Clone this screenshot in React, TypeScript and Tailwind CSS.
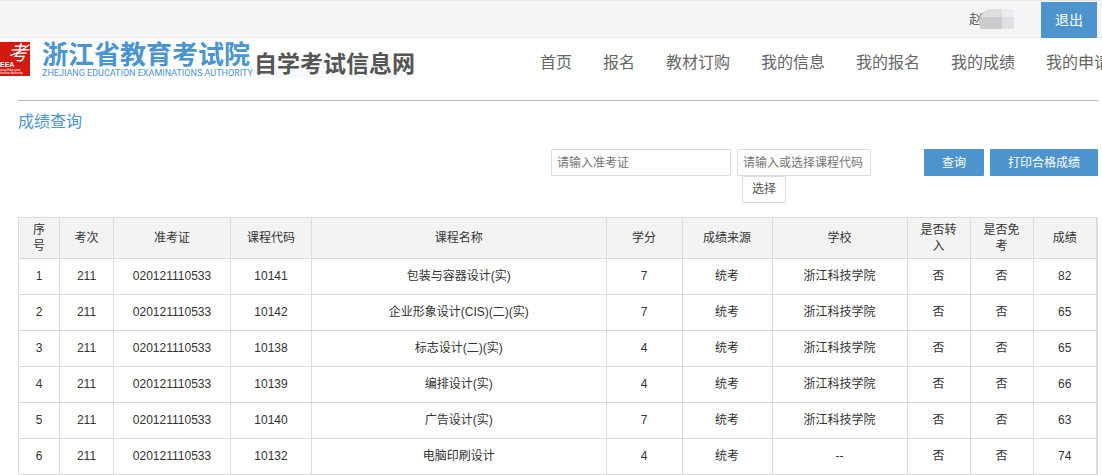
import { clsx } from "clsx";

type Score = {
  term: string;
  ticket: string;
  code: string;
  name: string;
  credit: number;
  source: string;
  school: string;
  transferred: string;
  exempt: string;
  score: number;
};

const NAV = ["首页", "报名", "教材订购", "我的信息", "我的报名", "我的成绩", "我的申请"];

const COLUMNS = [
  { label: "序号", width: "w-[41px]" },
  { label: "考次", width: "w-[54px]" },
  { label: "准考证", width: "w-[117px]" },
  { label: "课程代码", width: "w-[81px]" },
  { label: "课程名称", width: "" },
  { label: "学分", width: "w-[76px]" },
  { label: "成绩来源", width: "w-[90px]" },
  { label: "学校", width: "w-[135px]" },
  { label: "是否转入", width: "w-[63px]" },
  { label: "是否免考", width: "w-[63px]" },
  { label: "成绩", width: "w-[64px]" },
];

const base = { term: "211", ticket: "020121110533", source: "统考", school: "浙江科技学院", transferred: "否", exempt: "否" };

const SCORES: Score[] = [
  { ...base, code: "10141", name: "包装与容器设计(实)", credit: 7, score: 82 },
  { ...base, code: "10142", name: "企业形象设计(CIS)(二)(实)", credit: 7, score: 65 },
  { ...base, code: "10138", name: "标志设计(二)(实)", credit: 4, score: 65 },
  { ...base, code: "10139", name: "编排设计(实)", credit: 4, score: 66 },
  { ...base, code: "10140", name: "广告设计(实)", credit: 7, score: 63 },
  { ...base, code: "10132", name: "电脑印刷设计", credit: 4, school: "--", score: 74 },
];

function Seal() {
  return (
    <svg width="30" height="34" viewBox="0 0 30 34" className="shrink-0" aria-hidden="true">
      <rect width="30" height="34" fill="#d3190f" />
      <text x="8" y="18" fontSize="20" fontStyle="italic" fill="#fff">考</text>
      <text x="0" y="25" fontSize="7" fontWeight="700" fill="#fff">EEA</text>
      <text x="0" y="29" fontSize="3" fill="#fff">jiang Education</text>
      <text x="0" y="32" fontSize="3" fill="#fff">inations Authority</text>
    </svg>
  );
}

// user name is shown with everything but the surname masked
function MaskedName() {
  return (
    <div className="flex items-center text-sm text-[#666]">
      <span>赵</span>
      <svg width="36" height="20" viewBox="0 0 36 20" className="-ml-1" aria-hidden="true">
        <path d="M0 12C0 5 5 1 12 0H23V20H2C0 18 0 15 0 12Z" fill="#cbcbcd" />
        <path d="M2 8C5 2 8 0 13 0H23V8Z" fill="#dededf" />
        <rect x="23" width="12" height="8" fill="#ececf0" />
        <rect x="23" y="8" width="12" height="12" fill="#dfdfe4" />
      </svg>
    </div>
  );
}

function Brand() {
  return (
    <a href="#" className="flex h-9 w-[422px] shrink-0 items-start text-[#4a94d0]">
      <Seal />
      <div className="ml-3 w-[209px] shrink-0 whitespace-nowrap">
        <div className="text-[26px] leading-[26px] font-bold">浙江省教育考试院</div>
        <div className="font-['Roboto',sans-serif] text-[9px] leading-[11px]">ZHEJIANG EDUCATION EXAMINATIONS AUTHORITY</div>
      </div>
      <div className="ml-[3px] self-end bg-gradient-to-b from-white to-[#f6f8fc] text-[23px] leading-[28px] font-bold whitespace-nowrap text-[#555]">
        自学考试信息网
      </div>
    </a>
  );
}

export default function App() {
  const cell = "border border-[#dcdcdc] px-1 text-center";
  const bodyCell = clsx(cell, "pb-0.5");
  const primary = "h-[27px] rounded-[1px] bg-[#4d94cf] text-xs text-white";
  const field = "h-[27px] rounded-[1px] border border-[#dcdcdc] px-[5px] text-xs placeholder:text-[#757575]";

  return (
    <div className="overflow-hidden bg-white font-['Liberation_Sans','Noto_Sans_CJK_SC',sans-serif] text-[#333]">
      <header>
        <div className="flex h-[38px] items-end justify-end border-y border-[#ebebed] bg-[#f5f5f8] pr-[5px]">
          <div className="mr-[26px] self-center">
            <MaskedName />
          </div>
          <button className="-mb-px h-9 w-14 bg-[#4d94cf] text-sm text-white">退出</button>
        </div>
        <div className="flex h-[62px] items-start pt-1">
          <Brand />
          <nav className="ml-[118px] flex gap-[31px] pt-[9px] text-base leading-6 whitespace-nowrap text-[#666]">
            {NAV.map((item) => (
              <a key={item} href="#">{item}</a>
            ))}
          </nav>
        </div>
      </header>

      <main className="mr-1 ml-[18px] border-t border-[#bbb]">
        <h1 className="pt-[9px] text-base leading-6 text-[#4d94cf]">成绩查询</h1>

        <form className="mt-[15px] flex items-start justify-end gap-[6px]" onSubmit={(e) => e.preventDefault()}>
          <input className={clsx(field, "w-[180px]")} placeholder="请输入准考证" aria-label="准考证" />
          <div className="mr-[47px] w-[134px]">
            <input className={clsx(field, "block w-full")} placeholder="请输入或选择课程代码" aria-label="课程代码" />
            <button type="button" className="ml-[5px] block h-[27px] w-11 rounded-[1px] border border-[#dcdcdc] pb-0.5 text-xs text-[#555]">
              选择
            </button>
          </div>
          <button type="submit" className={clsx(primary, "w-[60px]")}>查询</button>
          <button type="button" className={clsx(primary, "w-[108px]")}>打印合格成绩</button>
        </form>

        <table className="mt-[14px] w-full table-fixed border-collapse border-r-2 border-[#dcdcdc] text-xs leading-4">
          <thead>
            <tr className="h-[41px] bg-[#f3f3f3]">
              {COLUMNS.map((c) => (
                <th key={c.label} className={clsx(cell, c.width, "px-3 font-normal")}>
                  {c.label}
                </th>
              ))}
            </tr>
          </thead>
          <tbody>
            {SCORES.map((s, i) => (
              <tr key={s.code} className="h-9">
                <td className={bodyCell}>{i + 1}</td>
                <td className={bodyCell}>{s.term}</td>
                <td className={bodyCell}>{s.ticket}</td>
                <td className={bodyCell}>{s.code}</td>
                <td className={bodyCell}>{s.name}</td>
                <td className={bodyCell}>{s.credit}</td>
                <td className={bodyCell}>{s.source}</td>
                <td className={bodyCell}>{s.school}</td>
                <td className={bodyCell}>{s.transferred}</td>
                <td className={bodyCell}>{s.exempt}</td>
                <td className={bodyCell}>{s.score}</td>
              </tr>
            ))}
          </tbody>
        </table>
      </main>
    </div>
  );
}
